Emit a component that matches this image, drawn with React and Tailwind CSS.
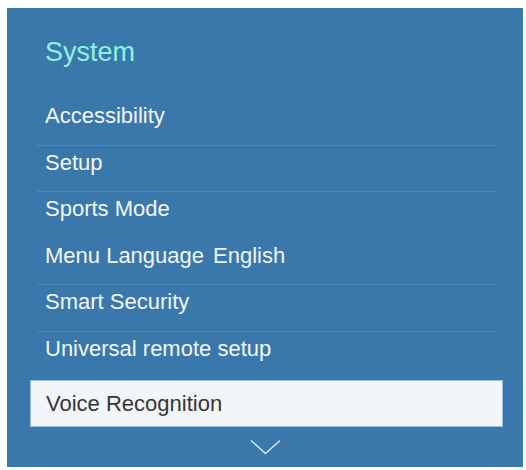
const items = [
  { label: "Accessibility", divider: true },
  { label: "Setup", divider: true },
  { label: "Sports Mode" },
  { label: "Menu Language", value: "English", divider: true },
  { label: "Smart Security", divider: true },
  { label: "Universal remote setup" },
];

const App = () => {
  return (
    <div className="w-[526px] h-[470px] bg-white pt-2 pl-[7px] font-['Liberation_Sans',Arial,sans-serif]">
      <div className="w-[516px] h-[459px] bg-[#3a78ab] pt-[28px] flex flex-col">
        <h1 className="pl-[38px] h-[32px] leading-[32px] text-[27px] font-normal text-[#8cf2e2]">
          System
        </h1>

        <ul className="mt-[31px] ml-[30px] mr-[27px]">
          {items.map((item) => (
            <li
              key={item.label}
              className={
                "h-[46.5px] pb-3 px-2 flex items-center text-[22px] text-[#f3f6fa] border-b " +
                (item.divider ? "border-[#4b87b9]" : "border-transparent")
              }
            >
              {item.label}
              {item.value && <span className="ml-[9px] text-[#eef4fc]">{item.value}</span>}
            </li>
          ))}
          <li className="-mx-[7px] mt-[2px] h-[47px] px-[15px] flex items-center bg-[#f2f5f8] border border-[#9dc0de] text-[22px] text-[#363636]">
            Voice Recognition
          </li>
        </ul>

        <div className="flex justify-center mt-[12px]">
          <svg width="31" height="16" viewBox="0 0 31 16" fill="none">
            <path d="M1 1.5 L15.5 14.5 L30 1.5" stroke="#d3e6f6" strokeWidth="1.6" />
          </svg>
        </div>
      </div>
    </div>
  );
};

export default App;
